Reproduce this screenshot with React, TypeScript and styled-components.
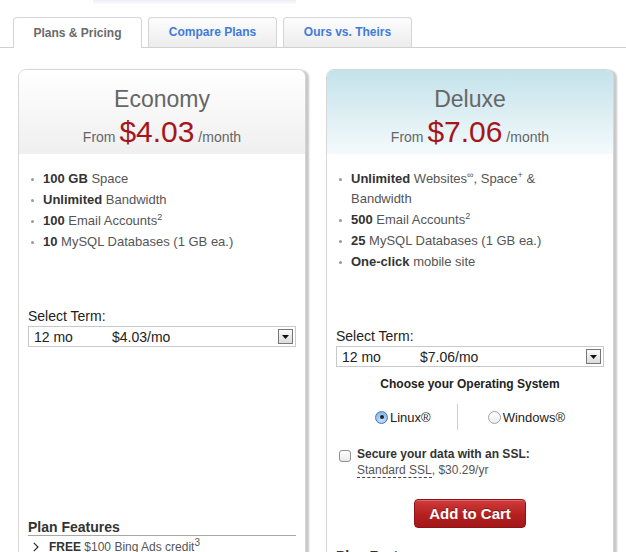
import React from "react";
import styled, { createGlobalStyle } from "styled-components";

const GlobalStyle = createGlobalStyle`
  html, body {
    margin: 0;
    padding: 0;
    background: #fff;
  }
  body {
    font-family: "Liberation Sans", Arial, Helvetica, sans-serif;
    color: #333;
    overflow: hidden;
  }
`;

type Plan = {
  name: string;
  price: string;
  features: React.ReactNode[];
  featured?: boolean;
};

// built when rendering, the styled parts below are defined after this
const getPlans = (): Plan[] => [
  {
    name: "Economy",
    price: "$4.03",
    features: [
      <>
        <b>100 GB</b> Space
      </>,
      <>
        <b>Unlimited</b> Bandwidth
      </>,
      <>
        <b>100</b> Email Accounts<Sup>2</Sup>
      </>,
      <>
        <b>10</b> MySQL Databases (1 GB ea.)
      </>,
    ],
  },
  {
    name: "Deluxe",
    price: "$7.06",
    featured: true,
    features: [
      <>
        <b>Unlimited</b> Websites<Sup>∞</Sup>, Space<Sup>+</Sup> &amp;
        <br />
        Bandwidth
      </>,
      <>
        <b>500</b> Email Accounts<Sup>2</Sup>
      </>,
      <>
        <b>25</b> MySQL Databases (1 GB ea.)
      </>,
      <>
        <b>One-click</b> mobile site
      </>,
    ],
  },
];

const tabs = ["Plans & Pricing", "Compare Plans", "Ours vs. Theirs"];

const App = () => {
  const plans = getPlans();
  return (
    <>
      <GlobalStyle />
      <Page>
        <TopFade />
        <TabBar>
          {tabs.map((t, i) => (
            <Tab key={t} $active={i === 0}>
              {t}
            </Tab>
          ))}
        </TabBar>
        <Cards>
          {plans.map((plan) => (
            <PlanCard key={plan.name} plan={plan} />
          ))}
        </Cards>
      </Page>
    </>
  );
};

export default App;

const PlanCard = ({ plan }: { plan: Plan }) => {
  const perMonth = plan.price + "/mo";
  return (
    <Card>
      <Header $featured={!!plan.featured}>
        <Title>{plan.name}</Title>
        <PriceLine>
          From <Price>{plan.price}</Price> /month
        </PriceLine>
      </Header>
      <Body>
        <FeatureList>
          {plan.features.map((f, i) => (
            <li key={i}>{f}</li>
          ))}
        </FeatureList>
        <TermLabel>Select Term:</TermLabel>
        <Select>
          <TermCol>12 mo</TermCol>
          <span>{perMonth}</span>
          <SelectArrow>
            <svg width="7" height="4" viewBox="0 0 7 4">
              <path d="M0 0h7L3.5 4z" fill="#111" />
            </svg>
          </SelectArrow>
        </Select>
        <Options>
          {plan.featured && (
            <>
              <OSTitle>Choose your Operating System</OSTitle>
              <RadioRow>
                <RadioOption>
                  <Radio $checked />
                  Linux®
                </RadioOption>
                <RadioDivider />
                <RadioOption>
                  <Radio />
                  Windows®
                </RadioOption>
              </RadioRow>
              <SslRow>
                <Checkbox />
                <div>
                  <SslTitle>Secure your data with an SSL:</SslTitle>
                  <SslSub>
                    <Dashed>Standard SSL</Dashed>, $30.29/yr
                  </SslSub>
                </div>
              </SslRow>
              <CartButton>Add to Cart</CartButton>
            </>
          )}
        </Options>
        <FeaturesTitle>Plan Features</FeaturesTitle>
        <FeatureItem>
          <svg width="6" height="10" viewBox="0 0 6 10">
            <path d="M0.8 0.8L5 5L0.8 9.2" fill="none" stroke="#222" strokeWidth="1.1" />
          </svg>
          <span>
            <b>FREE</b> $100 Bing Ads credit<BigSup>3</BigSup>
          </span>
        </FeatureItem>
      </Body>
    </Card>
  );
};

const Page = styled.div`
  width: 626px;
  height: 552px;
  overflow: hidden;
`;

const TopFade = styled.div`
  margin-left: 93px;
  width: 203px;
  height: 4px;
  background: linear-gradient(#eceef7, #fafbfe);
`;

const TabBar = styled.div`
  display: flex;
  gap: 6px;
  margin-top: 13px;
  padding-left: 13px;
  height: 30px;
  border-bottom: 1px solid #cfcfcf;
`;

const Tab = styled.div<{ $active?: boolean }>`
  box-sizing: border-box;
  width: 129px;
  height: 31px;
  border: 1px solid #d4d4d4;
  border-bottom: ${({ $active }) => ($active ? "none" : "1px solid #cfcfcf")};
  border-radius: 4px 4px 0 0;
  background: ${({ $active }) => ($active ? "#fff" : "linear-gradient(#fdfdfd, #ececec)")};
  color: ${({ $active }) => ($active ? "#6a6a6a" : "#3f7bdc")};
  font-size: 12px;
  font-weight: bold;
  display: flex;
  align-items: center;
  justify-content: center;
  padding-bottom: 1px;
`;

const Cards = styled.div`
  display: flex;
  align-items: flex-start;
  gap: 20px;
  margin-top: 21px;
  padding-left: 18px;
`;

const Card = styled.div`
  box-sizing: border-box;
  width: 288px;
  min-height: 620px;
  border: 1px solid #d6d6d6;
  border-radius: 8px 8px 0 0;
  box-shadow: 3px 1px 2px rgba(0, 0, 0, 0.22);
  background: #fff;
`;

const Header = styled.div<{ $featured: boolean }>`
  box-sizing: border-box;
  height: 84px;
  padding-top: 16px;
  border-radius: 7px 7px 0 0;
  text-align: center;
  background: ${({ $featured }) =>
    $featured ? "linear-gradient(#c3e2ea, #f4fafc)" : "linear-gradient(#ffffff, #efefef)"};
`;

const Title = styled.div`
  font-size: 23px;
  line-height: 26px;
  color: #666;
`;

const PriceLine = styled.div`
  margin-top: 3px;
  font-size: 14px;
  line-height: 34px;
  color: #666;
`;

const Price = styled.span`
  font-size: 30px;
  color: #a5161b;
`;

const Body = styled.div`
  padding: 0 9px;
`;

const FeatureList = styled.ul`
  list-style: none;
  margin: 0;
  padding: 15px 0 0 3px;

  li {
    position: relative;
    padding-left: 12px;
    font-size: 13px;
    line-height: 20px;
    color: #555;
    margin-bottom: 1px;
  }
  li:last-child {
    margin-bottom: 0;
  }
  li::before {
    content: "";
    position: absolute;
    left: 0;
    top: 9px;
    width: 3px;
    height: 3px;
    border-radius: 50%;
    background: #999;
  }
  b {
    color: #333;
  }
`;

const Sup = styled.sup`
  font-size: 9px;
  line-height: 0;
`;

const BigSup = styled.sup`
  font-size: 10px;
  line-height: 0;
`;

const TermLabel = styled.div`
  margin-top: 56px;
  font-size: 14px;
  line-height: 16px;
  color: #222;
`;

const Select = styled.div`
  position: relative;
  box-sizing: border-box;
  margin-top: 2px;
  height: 21px;
  border: 1px solid #c9c9c9;
  display: flex;
  align-items: center;
  padding-left: 5px;
  font-size: 14px;
  color: #222;
`;

const TermCol = styled.span`
  width: 78px;
`;

const SelectArrow = styled.span`
  position: absolute;
  right: 2px;
  top: 2px;
  box-sizing: border-box;
  width: 15px;
  height: 15px;
  border: 1px solid #777;
  background: linear-gradient(#fafafa, #dcdcdc);
  display: flex;
  align-items: center;
  justify-content: center;
`;

const Options = styled.div`
  height: 172px;
`;

const OSTitle = styled.div`
  margin-top: 9px;
  text-align: center;
  font-size: 12px;
  line-height: 16px;
  font-weight: bold;
  color: #222;
`;

const RadioRow = styled.div`
  margin-top: 12px;
  height: 26px;
  display: flex;
  align-items: center;
  justify-content: center;
`;

const RadioOption = styled.label`
  display: flex;
  align-items: center;
  gap: 2px;
  font-size: 13px;
  color: #222;
`;

const Radio = styled.span<{ $checked?: boolean }>`
  position: relative;
  box-sizing: border-box;
  width: 13px;
  height: 13px;
  border-radius: 50%;
  border: 1px solid ${({ $checked }) => ($checked ? "#4b77b0" : "#a3a3a3")};
  background: ${({ $checked }) =>
    $checked ? "radial-gradient(circle at 50% 70%, #c7e2fb, #74a9e2)" : "linear-gradient(#ffffff, #ececec)"};

  &::after {
    content: "";
    display: ${({ $checked }) => ($checked ? "block" : "none")};
    position: absolute;
    left: 3.5px;
    top: 3.5px;
    width: 4px;
    height: 4px;
    border-radius: 50%;
    background: #1c2733;
  }
`;

const RadioDivider = styled.span`
  width: 1px;
  height: 26px;
  margin: 0 30px 0 26px;
  background: #cfcfcf;
`;

const SslRow = styled.div`
  margin-top: 16px;
  padding-left: 3px;
  display: flex;
  gap: 6px;
`;

const Checkbox = styled.span`
  flex: none;
  box-sizing: border-box;
  width: 12px;
  height: 12px;
  margin-top: 4px;
  border: 1px solid #8f8f8f;
  border-radius: 3px;
  background: linear-gradient(#ffffff, #e9e9e9);
`;

const SslTitle = styled.div`
  font-size: 12px;
  line-height: 16px;
  font-weight: bold;
  color: #333;
`;

const SslSub = styled.div`
  font-size: 12px;
  line-height: 16px;
  color: #555;
`;

const Dashed = styled.span`
  border-bottom: 1px dashed #444;
`;

const CartButton = styled.button`
  display: block;
  margin: 21px auto 0;
  width: 112px;
  height: 29px;
  border: 1px solid #8e1317;
  border-radius: 4px;
  background: linear-gradient(#d03a3c, #b5201f 55%, #a3171b);
  box-shadow: inset 0 1px 0 rgba(255, 255, 255, 0.25);
  color: #fff;
  font-family: "Liberation Sans", Arial, sans-serif;
  font-size: 15px;
  font-weight: bold;
  text-shadow: 0 -1px 0 rgba(0, 0, 0, 0.35);
  padding: 0;
`;

const FeaturesTitle = styled.div`
  font-size: 14px;
  line-height: 16px;
  font-weight: bold;
  color: #333;
  border-bottom: 1px solid #a8a8a8;
`;

const FeatureItem = styled.div`
  margin-top: 3px;
  padding-left: 5px;
  display: flex;
  align-items: center;
  gap: 10px;
  font-size: 12px;
  line-height: 16px;
  color: #555;

  b {
    color: #333;
  }
`;
